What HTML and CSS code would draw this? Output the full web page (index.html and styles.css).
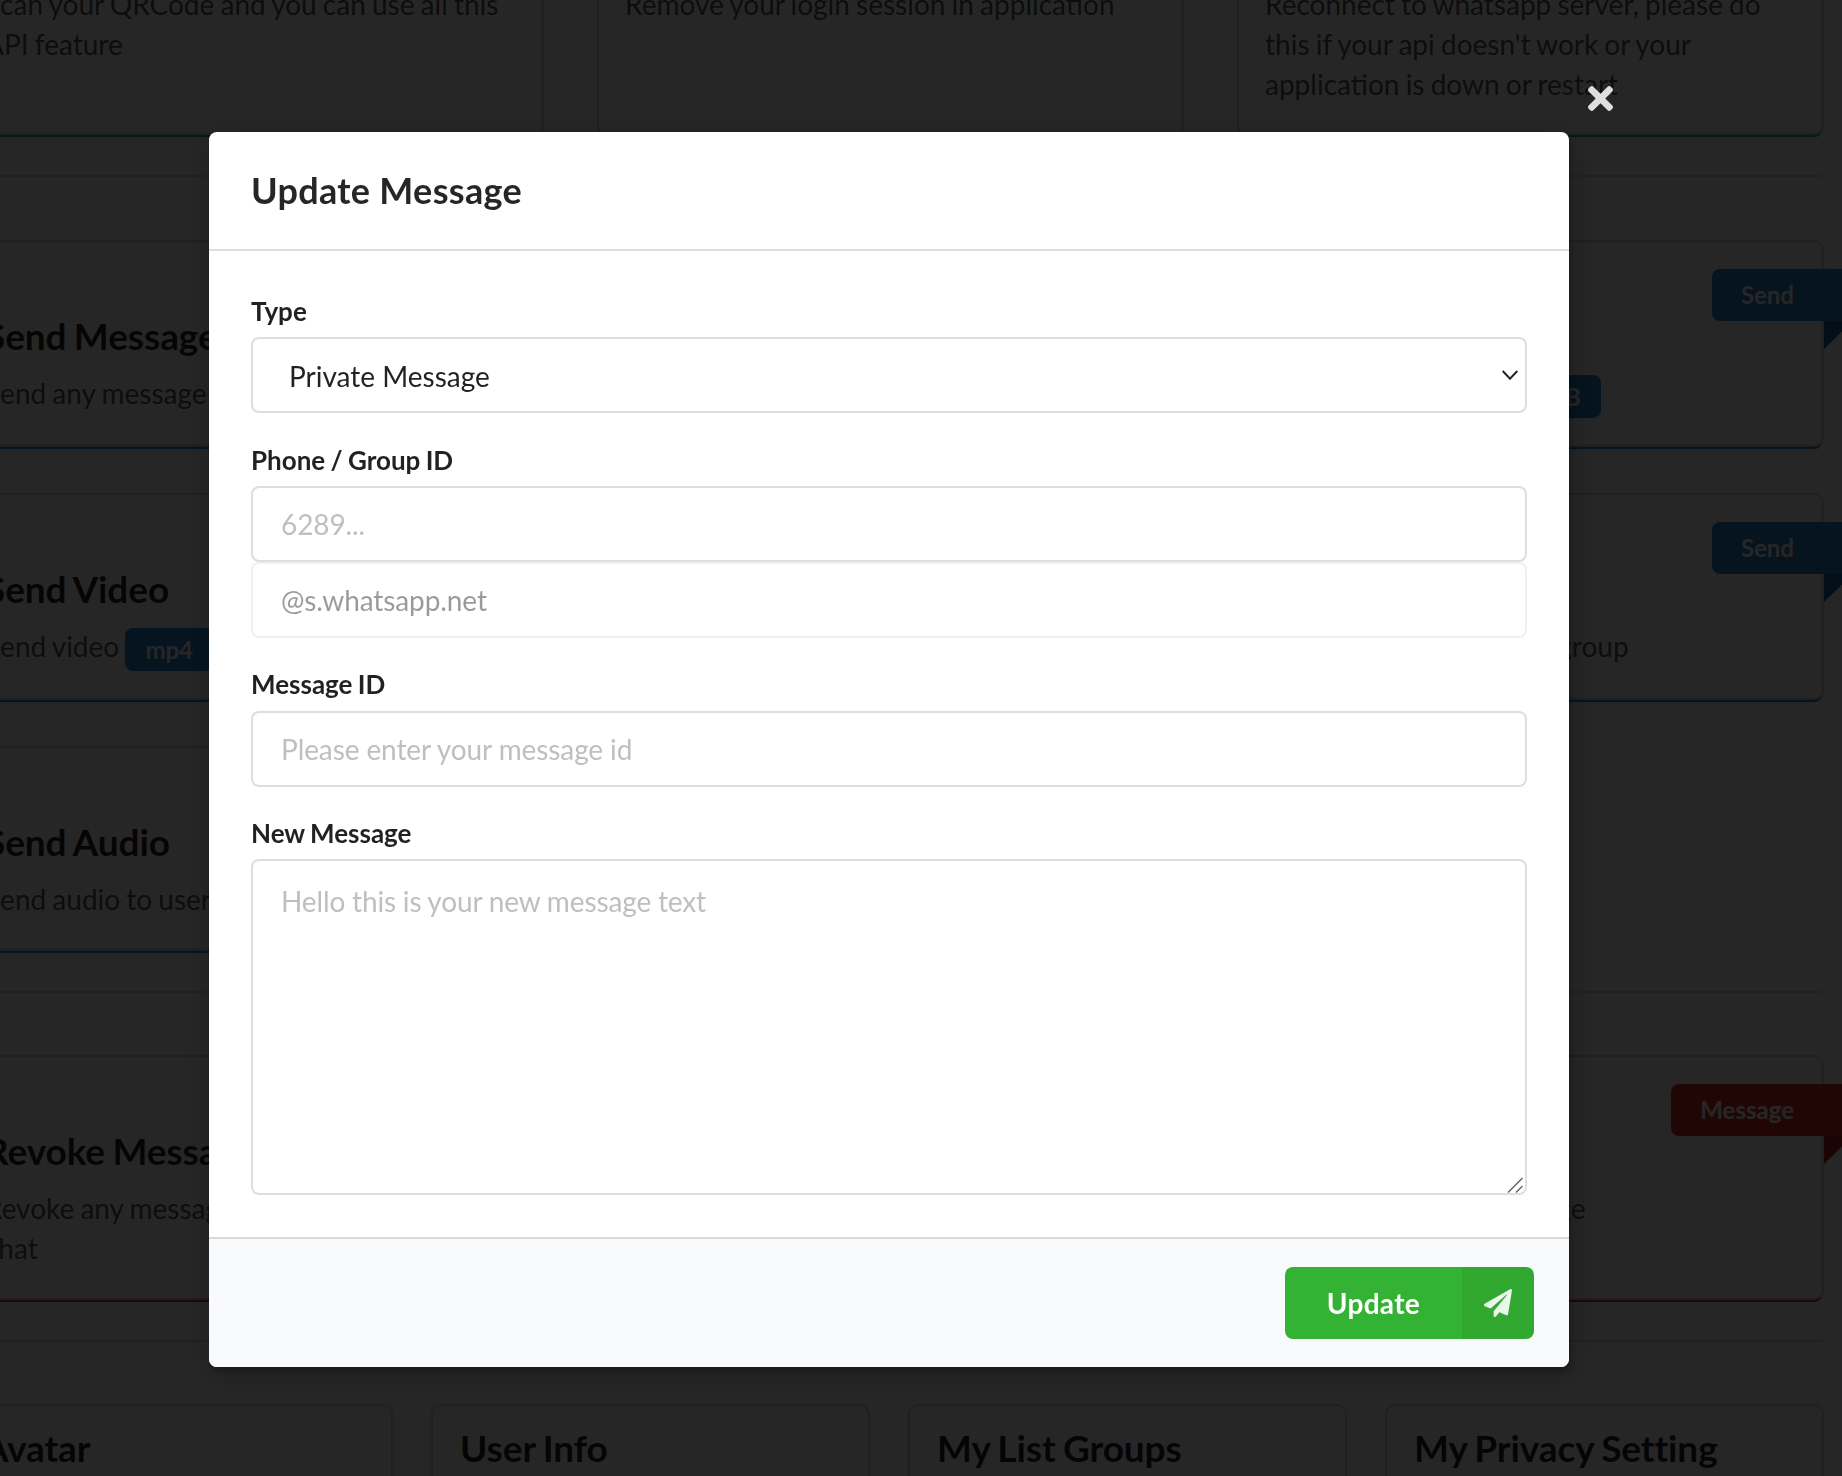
FILE: index.html
```html
<!DOCTYPE html>
<html lang="en">
<head>
<meta charset="utf-8">
<title>Update Message</title>
<link rel="stylesheet" href="styles.css">
</head>
<body>
<main class="page">
  <section class="grid3">
    <article class="card green"><span class="ribbon green">App</span><h2>Login</h2><p>Scan your QRCode and you can use all this API feature</p></article>
    <article class="card green"><span class="ribbon green">App</span><h2>Logout</h2><p>Remove your login session in application</p></article>
    <article class="card green"><span class="ribbon green">App</span><h2>Reconnect</h2><p>Reconnect to whatsapp server, please do this if your api doesn't work or your application is down or restart</p></article>
  </section>
  <hr class="divider">
  <section class="grid3">
    <article class="card blue"><span class="ribbon blue">Send</span><h2>Send Message</h2><p>Send any message to user or group</p></article>
    <article class="card blue"><span class="ribbon blue">Send</span><h2>Send Image</h2><p>Send image with <span class="tag">jpg/jpeg/png</span> type</p></article>
    <article class="card blue"><span class="ribbon blue">Send</span><h2>Send File</h2><p>Send any file up to <span class="tag">10MB</span></p></article>
    <article class="card blue"><span class="ribbon blue">Send</span><h2>Send Video</h2><p>Send video <span class="tag">mp4</span> up to <span class="tag">30MB</span></p></article>
    <article class="card blue"><span class="ribbon blue">Send</span><h2>Send Location</h2><p>Send location to user or group</p></article>
    <article class="card blue"><span class="ribbon blue">Send</span><h2>Send Contact</h2><p class="loose">Send contact to user or group</p></article>
    <article class="card blue"><span class="ribbon blue">Send</span><h2>Send Audio</h2><p>Send audio to user or group</p></article>
    <article class="card blue"><span class="ribbon blue">Send</span><h2>Send Poll</h2><p>Send a poll to user or group</p></article>
  </section>
  <hr class="divider tight">
  <section class="grid3">
    <article class="card red"><span class="ribbon red">Message</span><h2>Revoke Message</h2><p>Revoke any message in private or group chat</p></article>
    <article class="card red"><span class="ribbon red">Message</span><h2>Delete Message</h2><p>Delete any message in private or group chat</p></article>
    <article class="card red"><span class="ribbon red">Message</span><h2>Update Message</h2><p>Update your sent message</p></article>
  </section>
  <hr class="divider tight">
  <section class="grid4">
    <article class="plain"><h2>Avatar</h2><p>Get avatar of a user</p></article>
    <article class="plain"><h2>User Info</h2><p>Get user information</p></article>
    <article class="plain"><h2>My List Groups</h2><p>Get your joined groups</p></article>
    <article class="plain"><h2>My Privacy Setting</h2><p>Get your privacy settings</p></article>
  </section>
</main>

<div class="overlay">
  <div class="modal">
    <svg class="close" viewBox="0 80 352 352" aria-hidden="true"><path d="M242.72 256l100.07-100.07c12.28-12.28 12.28-32.19 0-44.48l-22.24-22.24c-12.28-12.28-32.19-12.28-44.48 0L176 189.28 75.93 89.21c-12.28-12.28-32.19-12.28-44.48 0L9.21 111.45c-12.28 12.28-12.28 32.19 0 44.48L109.28 256 9.21 356.07c-12.28 12.28-12.28 32.19 0 44.48l22.24 22.24c12.28 12.28 32.2 12.28 44.48 0L176 322.72l100.07 100.07c12.28 12.28 32.2 12.28 44.48 0l22.24-22.24c12.28-12.28 12.28-32.19 0-44.48L242.72 256z"/></svg>
    <header class="modal-header">Update Message</header>
    <form class="modal-content">
      <div class="field">
        <label for="type">Type</label>
        <div class="select-wrap">
          <select id="type" class="control select"><option>Private Message</option></select>
          <svg class="chevron" viewBox="0 0 16 10" aria-hidden="true"><path d="M.7 1L8 8.7 15.3 1"/></svg>
        </div>
      </div>
      <div class="field">
        <label for="phone">Phone / Group ID</label>
        <input id="phone" class="control" type="text" placeholder="6289...">
        <input class="control suffix" type="text" value="@s.whatsapp.net" disabled>
      </div>
      <div class="field">
        <label for="mid">Message ID</label>
        <input id="mid" class="control" type="text" placeholder="Please enter your message id">
      </div>
      <div class="field">
        <label for="msg">New Message</label>
        <div class="area-wrap">
          <textarea id="msg" class="control area" placeholder="Hello this is your new message text"></textarea>
          <svg class="grip" viewBox="0 0 16 16" aria-hidden="true"><path d="M1 15.5L15.5 1M9 15.5L15.5 9"/></svg>
        </div>
      </div>
    </form>
    <footer class="modal-actions">
      <button class="update" type="button">
        <span class="update-text">Update</span>
        <span class="update-icon"><svg viewBox="0 0 512 512" aria-hidden="true"><path d="M476 3.2L12.5 270.6c-18.1 10.4-15.8 35.6 2.2 43.2L121 358.4l287.3-253.2c5.5-4.9 13.3 2.6 8.6 8.3L176 407v80.5c0 23.6 28.5 32.9 42.5 15.8L282 426l124.6 52.2c14.2 6 30.4-2.9 33-18.2l72-432C515 7.8 493.3-6.8 476 3.2z"/></svg></span>
      </button>
    </footer>
  </div>
</div>
</body>
</html>
```

FILE: styles.css
```css
* { box-sizing: border-box; }
html, body { margin: 0; height: 100%; overflow: hidden; background: #fff; }
body { font-family: Lato, "Liberation Sans", sans-serif; font-size: 28px; line-height: 40px; color: rgba(0,0,0,.87); }

.page { width: 1863px; margin: -147px 0 0 -41px; }
.grid3 { display: grid; grid-template-columns: repeat(3, 583px); column-gap: 57px; row-gap: 49.5px; }
.grid4 { display: grid; grid-template-columns: repeat(4, 435px); column-gap: 42px; margin-left: -3px; }
.divider { border: 0; border-top: 2px solid rgba(34,36,38,.15); margin: 42px 0 65px; }
.divider.tight { margin-bottom: 64px; }

.card, .plain { position: relative; background: #fff; border-radius: 8px; padding: 71px 26px 30px; box-shadow: 0 0 0 2px #d4d4d5, 0 2px 6px 0 #d4d4d5; }
.card:has(.tag) { min-height: 203px; }
.card.green { padding-bottom: 29px; box-shadow: 0 0 0 2px #d4d4d5, 0 4px 0 0 #21ba45, 0 2px 6px 0 #d4d4d5; }
.card.blue { box-shadow: 0 0 0 2px #d4d4d5, 0 4px 0 0 #2185d0, 0 2px 6px 0 #d4d4d5; }
.card.red { box-shadow: 0 0 0 2px #d4d4d5, 0 4px 0 0 #db2828, 0 2px 6px 0 #d4d4d5; }
.plain { padding: 19px 27px 28px; }

h2 { margin: 0 0 14px; font-size: 37px; line-height: 46px; font-weight: 700; letter-spacing: -.1px; word-spacing: -1.5px; color: rgba(0,0,0,.85); }
.card p, .plain p { margin: 0; word-spacing: -1px; color: rgba(0,0,0,.68); }
.card p.loose { word-spacing: 0; }

.tag { display: inline-block; padding: 0 20px; height: 43px; margin: -3px 0; line-height: 43px; font-size: 24px; font-weight: 700; word-spacing: 0; color: #fff; background: #2185d0; border-radius: 8px; vertical-align: middle; }

.ribbon { position: absolute; top: 27px; right: -31px; height: 52px; padding: 0 59px 0 29px; font-size: 24px; line-height: 52px; font-weight: 700; color: #fff; border-radius: 8px 0 0 8px; }
.ribbon::after { content: ""; position: absolute; top: 100%; right: 0; border-top: 28px solid #1a69a4; border-right: 29px solid transparent; }
.ribbon.green { background: #21ba45; }
.ribbon.green::after { border-top-color: #198f35; }
.ribbon.blue { background: #2185d0; }
.ribbon.blue::after { border-top-color: #1a69a4; }
.ribbon.red { background: #db2828; }
.ribbon.red::after { border-top-color: #b21e1e; }

.overlay { position: fixed; inset: 0; background: rgba(0,0,0,.85); padding: 132px 0 0 209px; }
.modal { position: relative; width: 1360px; background: #fff; border-radius: 8px; box-shadow: 2px 6px 6px 0 rgba(0,0,0,.2), 2px 6px 30px 4px rgba(0,0,0,.2); }
.close { position: absolute; top: -46px; left: calc(100% + 19px); width: 25px; height: 25px; fill: #fff; opacity: .85; }

.modal-header { padding: 34px 42px 35px; font-size: 36px; line-height: 48px; font-weight: 700; letter-spacing: .3px; color: rgba(0,0,0,.85); border-bottom: 2px solid rgba(34,36,38,.15); }
.modal-content { padding: 41px 42px 42px; display: flex; flex-direction: column; gap: 28px; }
.field label { display: block; margin-bottom: 7.5px; font-size: 26px; line-height: 37.5px; font-weight: 700; word-spacing: -1px; color: rgba(0,0,0,.87); }
.field:nth-child(-n+2) label { margin-bottom: 7px; line-height: 38px; }
.field:last-child label { margin-bottom: 6.5px; }

.control { display: block; width: 100%; height: 76px; margin: 0; padding: 0 28px; font: 400 28px/34px Lato, "Liberation Sans", sans-serif; letter-spacing: -.1px; color: rgba(0,0,0,.87); background: #fff; border: 2px solid rgba(34,36,38,.15); border-radius: 8px; outline: none; }
.control::placeholder { color: #bfbfbf; opacity: 1; }
.suffix { opacity: .45; }
.select-wrap, .area-wrap { position: relative; }
.select { appearance: none; padding: 2px 0 0 36px; letter-spacing: 0; }
.chevron { position: absolute; top: 33px; right: 9px; width: 16px; height: 10px; fill: none; stroke: #222; stroke-width: 2; }
.area { height: 336px; padding: 22px 28px; line-height: 36px; word-spacing: -.4px; resize: none; }
.grip { position: absolute; right: 4px; bottom: 2px; width: 16px; height: 16px; fill: none; stroke: #666; stroke-width: 1.5; }

.modal-actions { display: flex; justify-content: flex-end; padding: 28px 35px; background: #f9fafb; border-top: 2px solid rgba(34,36,38,.15); border-radius: 0 0 8px 8px; }
.update { display: inline-flex; align-items: stretch; height: 72px; padding: 0; border: 0; border-radius: 8px; overflow: hidden; background: #34b233; color: #fff; font: 700 28px/72px Lato, "Liberation Sans", sans-serif; letter-spacing: .3px; }
.update-text { padding: 0 42px; }
.update-icon { display: flex; align-items: center; justify-content: center; width: 72px; background: rgba(0,0,0,.05); }
.update-icon svg { width: 28px; height: 28px; fill: #fff; opacity: .9; }
```
